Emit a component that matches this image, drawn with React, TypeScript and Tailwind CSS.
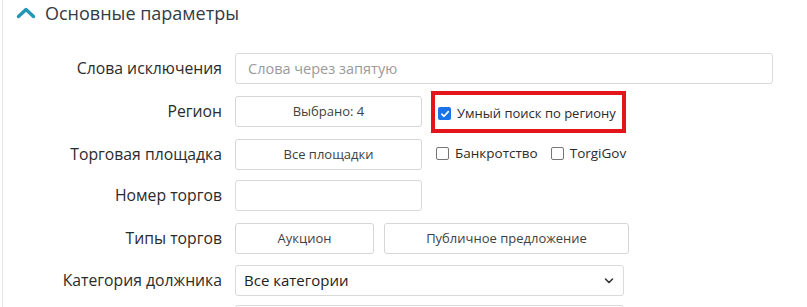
import React from "react";

const font = { fontFamily: '"Open Sans", "Noto Sans", sans-serif' };

function Label({ children }: { children: React.ReactNode }) {
  return (
    <div className="w-[219px] shrink-0 text-right text-[15.75px] text-[#2b2b2b] leading-none">
      {children}
    </div>
  );
}

function Btn({ w, children }: { w: string; children: React.ReactNode }) {
  return (
    <div
      className={`${w} h-[31px] flex items-center justify-center rounded-[3px] border border-[#d6d6d6] bg-white text-[13px] text-[#3f3f3f]`}
    >
      {children}
    </div>
  );
}

function Check({ checked, small, children }: { checked?: boolean; small?: boolean; children: React.ReactNode }) {
  return (
    <div className={`flex items-center gap-[6px] ${small ? "text-[13px]" : "text-[13.5px]"} text-[#2b2b2b]`}>
      {checked ? (
        <div className="w-[13px] h-[13px] rounded-[2px] bg-[#1a73e8] flex items-center justify-center">
          <svg width="10" height="10" viewBox="0 0 10 10">
            <path d="M1.8 5.2 L4 7.3 L8.3 2.6" fill="none" stroke="white" strokeWidth="1.6" strokeLinecap="round" strokeLinejoin="round" />
          </svg>
        </div>
      ) : (
        <div className="w-[13px] h-[13px] rounded-[2px] border border-[#767676] bg-white" />
      )}
      <span>{children}</span>
    </div>
  );
}

export default function App() {
  return (
    <div className="w-[807px] h-[307px] overflow-hidden bg-white" style={font}>
      <div className="ml-[2px] h-full border-l border-[#e6e6e6]">
        <div className="flex items-center h-[26px] pl-[12px]">
          <svg width="22" height="14" viewBox="0 0 22 14">
            <path d="M3.5 10.5 L11 3.5 L18.5 10.5" fill="none" stroke="#2196b5" strokeWidth="3.4" strokeLinecap="round" strokeLinejoin="round" />
          </svg>
          <span className="ml-[8px] text-[18px] text-[#333b44]">Основные параметры</span>
        </div>

        <div className="mt-[27px] flex items-center">
          <Label>Слова исключения</Label>
          <div className="ml-[13px] w-[538px] h-[31px] rounded-[3px] border border-[#dadada] flex items-center pl-[12px] text-[14.5px] text-[#9a9a9a]">
            Слова через запятую
          </div>
        </div>

        <div className="mt-[12px] flex items-center">
          <Label>Регион</Label>
          <div className="ml-[13px]">
            <Btn w="w-[187px]">Выбрано: 4</Btn>
          </div>
          <div className="relative ml-[16px] mt-[4px]">
            <div className="absolute -left-[7px] -top-[13px] w-[195px] h-[42px] border-[4px] border-[#e3151b]" />
            <Check checked small>Умный поиск по региону</Check>
          </div>
        </div>

        <div className="mt-[12px] flex items-center">
          <Label>Торговая площадка</Label>
          <div className="ml-[13px]">
            <Btn w="w-[187px]">Все площадки</Btn>
          </div>
          <div className="ml-[14px] -mt-[3px] flex items-center gap-[13px]">
            <Check>Банкротство</Check>
            <Check>TorgiGov</Check>
          </div>
        </div>

        <div className="mt-[10px] flex items-center">
          <Label>Номер торгов</Label>
          <div className="ml-[13px] w-[187px] h-[31px] rounded-[3px] border border-[#dadada]" />
        </div>

        <div className="mt-[12px] flex items-center">
          <Label>Типы торгов</Label>
          <div className="ml-[13px] flex gap-[10px]">
            <Btn w="w-[139px]">Аукцион</Btn>
            <Btn w="w-[245px]">Публичное предложение</Btn>
          </div>
        </div>

        <div className="mt-[11px] flex items-center">
          <Label>Категория должника</Label>
          <div className="ml-[13px] w-[389px] h-[31px] rounded-[3px] border border-[#dadada] flex items-center justify-between pl-[8px] pr-[9px] text-[15px] text-[#222]">
            <span>Все категории</span>
            <svg width="10" height="8" viewBox="0 0 10 8">
              <path d="M1.5 2 L5 5.5 L8.5 2" fill="none" stroke="#333" strokeWidth="1.6" strokeLinecap="round" strokeLinejoin="round" />
            </svg>
          </div>
        </div>

        <div className="mt-[9px] flex items-center">
          <div className="w-[219px] shrink-0" />
          <div className="ml-[13px] w-[389px] h-[31px] rounded-[3px] border border-[#dadada]" />
        </div>
      </div>
    </div>
  );
}
